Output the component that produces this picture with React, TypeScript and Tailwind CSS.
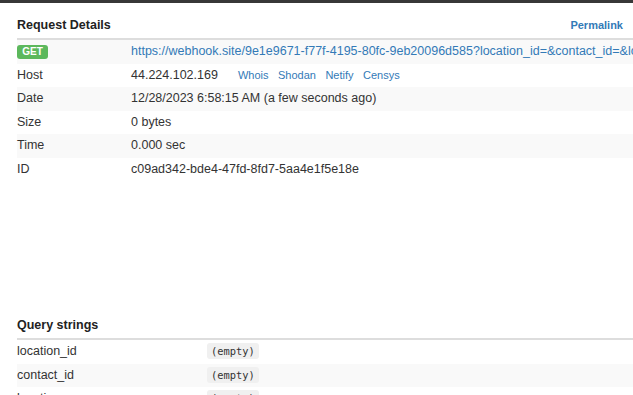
import React from 'react'

type Row = { label: string; value: React.ReactNode }

const url =
  'https://webhook.site/9e1e9671-f77f-4195-80fc-9eb20096d585?location_id=&contact_id=&location_name=&contact_name='

const lookups = ['Whois', 'Shodan', 'Netify', 'Censys']

const details: Row[] = [
  {
    label: 'GET',
    value: (
      <a className="whitespace-nowrap text-[#337ab7]" href="#">
        {url}
      </a>
    ),
  },
  {
    label: 'Host',
    value: (
      <span className="flex items-baseline whitespace-nowrap">
        <span>44.224.102.169</span>
        <span className="ml-[20px] flex gap-[9.5px] text-[11px] text-[#337ab7]">
          {lookups.map(l => (
            <a key={l} href="#">
              {l}
            </a>
          ))}
        </span>
      </span>
    ),
  },
  { label: 'Date', value: '12/28/2023 6:58:15 AM (a few seconds ago)' },
  { label: 'Size', value: '0 bytes' },
  { label: 'Time', value: '0.000 sec' },
  { label: 'ID', value: 'c09ad342-bde4-47fd-8fd7-5aa4e1f5e18e' },
]

const queryStrings = ['location_id', 'contact_id', 'location_name']

function Empty() {
  return (
    <code className="rounded-[3px] bg-[#f0f0f0] px-[4px] py-[2px] font-['DejaVu_Sans_Mono',monospace] text-[10.4px] text-[#333]">
      (empty)
    </code>
  )
}

export default function App() {
  return (
    <div className="h-[395px] w-[633px] overflow-hidden bg-white font-['Liberation_Sans',Arial,sans-serif] text-[12.5px] text-[#333]">
      <div className="h-[3px] bg-[#383838]" />

      <div className="pl-[17px]">
        <div className="mt-[13px] flex h-[20px] items-baseline justify-between pr-[10px]">
          <h3 className="text-[12.5px] font-bold text-[#222]">Request Details</h3>
          <a href="#" className="text-[11px] font-bold text-[#337ab7]">
            Permalink
          </a>
        </div>
        <div className="mt-[2px] border-t-2 border-[#ddd]">
          {details.map((row, i) => (
            <div
              key={row.label}
              className={`flex h-[23.5px] items-center ${i % 2 === 0 ? 'bg-[#f9f9f9]' : 'bg-white'}`}
            >
              <div className="w-[114px] shrink-0">
                {row.label === 'GET' ? (
                  <span className="inline-flex h-[14px] w-[31px] items-center justify-center rounded-[3px] bg-[#5cb85c] text-[10px] font-bold text-white">
                    GET
                  </span>
                ) : (
                  row.label
                )}
              </div>
              <div className="whitespace-nowrap">{row.value}</div>
            </div>
          ))}
        </div>

        <div className="mt-[135px] flex h-[20px] items-baseline">
          <h3 className="text-[12.5px] font-bold text-[#222]">Query strings</h3>
        </div>
        <div className="mt-[2px] border-t-2 border-[#ddd]">
          {queryStrings.map((q, i) => (
            <div
              key={q}
              className={`flex h-[23.5px] items-center ${i % 2 === 1 ? 'bg-[#f9f9f9]' : 'bg-white'}`}
            >
              <div className="w-[190px] shrink-0">{q}</div>
              <div>
                <Empty />
              </div>
            </div>
          ))}
        </div>
      </div>
    </div>
  )
}
